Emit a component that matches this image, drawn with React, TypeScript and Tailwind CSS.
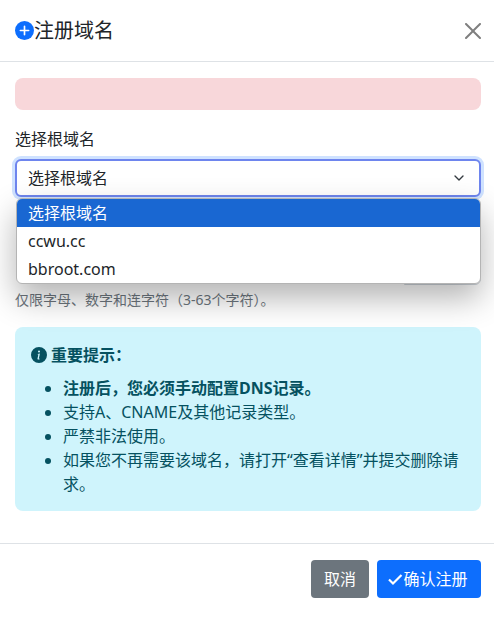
import { ChevronDown } from "lucide-react";

const font = "font-['Noto_Sans','Noto_Sans_CJK_SC',sans-serif]";

export default function App() {
  return (
    <div className={`w-[494px] h-[621px] bg-white text-[#212529] text-[16px] leading-[24px] overflow-hidden ${font}`}>
      <div className="h-[62px] pl-[15px] pr-[13px] flex items-center justify-between border-b border-[#dee2e6]">
        <h5 className="flex items-center text-[20px] leading-[30px]">
          <svg width="19" height="19" viewBox="0 0 16 16">
            <circle cx="8" cy="8" r="8" fill="#0d6efd" />
            <path d="M8 4.5v7M4.5 8h7" stroke="#fff" strokeWidth="1.4" strokeLinecap="round" />
          </svg>
          注册域名
        </h5>
        <button className="w-[16px] h-[16px] text-[#7f7f7f]">
          <svg width="16" height="16" viewBox="0 0 16 16" fill="currentColor">
            <path d="M.293.293a1 1 0 0 1 1.414 0L8 6.586 14.293.293a1 1 0 1 1 1.414 1.414L9.414 8l6.293 6.293a1 1 0 0 1-1.414 1.414L8 9.414l-6.293 6.293a1 1 0 0 1-1.414-1.414L6.586 8 .293 1.707a1 1 0 0 1 0-1.414" />
          </svg>
        </button>
      </div>

      <div className="pl-[15px] pr-[13px] pt-[16px]">
        <div className="h-[32px] rounded-[8px] bg-[#f8d7da]" />

        <div className="mt-[16px] relative">
          <label className="block h-[33px] leading-[26px]">选择根域名</label>
          <div className="h-[38px] rounded-[6px] border-2 border-[#6e85ee] ring-[3px] ring-[#0d6efd]/20 bg-white pl-[11px] pr-[12px] flex items-center justify-between">
            <span>选择根域名</span>
            <ChevronDown size={16} strokeWidth={2} className="text-[#343a40]" />
          </div>

          <div className="h-[88px] flex justify-end items-end">
            <div className="w-[77px] h-[38px] rounded-r-[6px] bg-[#e9ecef] border border-[#ced4da]" />
          </div>
          <div className="mt-[5px] text-[14px] leading-[20px] text-[#6c757d]">仅限字母、数字和连字符（3-63个字符）。</div>

          <div className="absolute left-[1px] right-0 top-[72px] rounded-[6px] bg-white overflow-hidden border border-[#b4b4b4] shadow-[0_14px_32px_rgba(0,0,0,0.3)] leading-[28px]">
            <div className="bg-[#1967d2] text-white pl-[11px] h-[28px]">选择根域名</div>
            <div className="pl-[11px] h-[28px]">ccwu.cc</div>
            <div className="pl-[11px] h-[28px]">bbroot.com</div>
          </div>
        </div>

        <div className="mt-[17px] h-[184px] rounded-[8px] bg-[#cff4fc] text-[#055160] pt-[16px] px-[16px]">
          <div className="flex items-center font-bold">
            <svg width="16" height="16" viewBox="0 0 16 16" fill="currentColor" className="mr-[4px]">
              <path d="M8 16A8 8 0 1 0 8 0a8 8 0 0 0 0 16m.93-9.412-1 4.705c-.07.34.029.533.304.533.194 0 .487-.07.686-.246l-.088.416c-.287.346-.92.598-1.465.598-.703 0-1.002-.422-.808-1.319l.738-3.468c.064-.302.005-.412-.298-.413l-.45-.082.082-.38 2.29-.45zM8 5.5a1 1 0 1 1 0-2 1 1 0 0 1 0 2" />
            </svg>
            重要提示：
          </div>
          <ul className="list-disc pl-[32px] mt-[9px]">
            <li className="font-bold">注册后，您必须手动配置DNS记录。</li>
            <li>支持A、CNAME及其他记录类型。</li>
            <li>严禁非法使用。</li>
            <li>如果您不再需要该域名，请打开“查看详情”并提交删除请求。</li>
          </ul>
        </div>
      </div>

      <div className="mt-[32px] border-t border-[#dee2e6] pt-[16px] pr-[13px] flex justify-end gap-[8px]">
        <button className="h-[38px] w-[58px] rounded-[4px] bg-[#6c757d] text-white">取消</button>
        <button className="h-[38px] w-[104px] rounded-[4px] bg-[#0d6efd] text-white flex items-center justify-center pr-[3px]">
          <svg width="16" height="16" viewBox="0 0 16 16" fill="none" stroke="currentColor" strokeWidth="2.2">
            <path d="M2 8.5l4 4L14.5 4" />
          </svg>
          确认注册
        </button>
      </div>
    </div>
  );
}
